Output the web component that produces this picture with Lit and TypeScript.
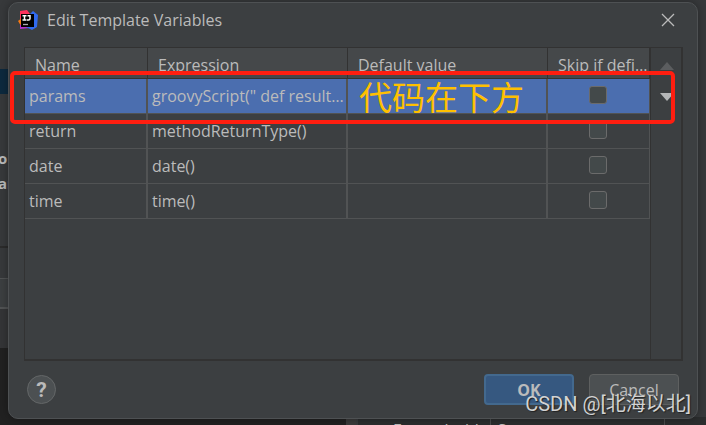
import { LitElement, html, css } from "lit";
import { customElement, state } from "lit/decorators.js";

interface Variable {
  name: string;
  expression: string;
  value: string;
  skip: boolean;
}

@customElement("app-root")
export class AppRoot extends LitElement {
  static styles = css`
    :host {
      display: block;
      position: relative;
      min-height: 100vh;
      overflow: hidden;
      background: #37393b;
      color: #bbbbbb;
      font: 16px/22px "Open Sans", "Noto Sans CJK SC", sans-serif;
    }
    * { box-sizing: border-box; }
    .backdrop {
      position: absolute;
      inset: 0;
      display: flex;
      flex-direction: column;
      overflow: hidden;
    }
    .above { height: 69px; }
    .chosen, .options, .field, .under { width: 50%; }
    .chosen { height: 25px; background: #0d293e; }
    .options { height: 154px; padding-top: 52px; font-weight: 700; font-size: 15px; line-height: 25px; border-bottom: 2px solid #2b2b2b; }
    .options div { height: 25px; margin-left: -2px; }
    .field { height: 31px; margin-top: 30px; background: #3c3f41; border: solid #515354; border-width: 1px 0 2px; }
    .under { height: 39px; background: #343537; }
    .editor { flex: 1; display: flex; align-items: flex-end; }
    .code { flex: 0 0 49%; align-self: stretch; background: #212121; }
    .gutter { flex: none; width: 10px; height: 8px; margin-right: 2px; background: #3a3a3a; }
    .expand { flex: 1; height: 8px; padding-left: 35px; background: #2b2d2e; display: flex; gap: 5px; }
    .expand span { padding-top: 2px; }
    .expand .combo { width: 175px; padding-left: 7px; border: solid #4a4c4d; border-width: 0 1px; }
    .dialog {
      position: relative;
      display: flex;
      flex-direction: column;
      min-height: calc(100vh - 8px);
      margin: 2px 8px 6px;
      padding: 0 14px 13px 15px;
      background: #3c3f41;
      border: 1px solid #4e5153;
      border-radius: 10px;
      box-shadow: 0 0 8px #00000055;
    }
    .titlebar { display: flex; align-items: center; height: 34px; margin: 0 0 10px -6px; }
    .logo { width: 20px; height: 20px; margin-right: 9px; }
    h1 { flex: 1; margin: 0; font-size: 16px; font-weight: 400; }
    .close { display: flex; padding: 6px; margin-right: 2px; border: 0; background: none; }
    .grid {
      flex: 1;
      display: flex;
      border: solid #323232;
      border-width: 1px 2px 2px 1px;
    }
    .data { flex: 1; min-width: 0; }
    table { width: 100%; table-layout: fixed; border-collapse: separate; border-spacing: 0; }
    .c1 { width: 123px; }
    .c2, .c3 { width: 200px; }
    th, td {
      padding: 0 0 0 4px;
      font-weight: 400;
      text-align: left;
      white-space: nowrap;
      overflow: hidden;
      text-overflow: ellipsis;
    }
    th { height: 31px; padding: 4px 0 0 10px; background: #45484a; border-right: 1px solid #323232; border-bottom: 1px solid #323232; }
    td { height: 35px; border-right: 2px solid #515354; border-bottom: 1px solid #515354; }
    td:last-child { border-right-width: 1px; text-align: center; }
    .selected td { background: #4b6eaf; }
    .check {
      appearance: none;
      display: inline-block;
      width: 18px;
      height: 18px;
      margin: 0 5px 4px 0;
      vertical-align: middle;
      background: #43494a;
      border: 1px solid #6b6b6b;
      border-radius: 3px;
    }
    .check:checked { background: #4b6eaf; }
    .side { width: 31px; padding: 14px 0 0 9px; border-left: 1px solid #323232; display: flex; flex-direction: column; gap: 23px; }
    .move { display: flex; padding: 0; border: 0; background: none; color: #b4b6b7; }
    .move:disabled { color: #5b5d5f; }
    .footer { display: flex; align-items: center; gap: 15px; margin: 13px 4px 0 3px; }
    .help {
      width: 29px;
      height: 29px;
      margin-right: auto;
      padding: 2px 0 0;
      border: 1px solid #646768;
      border-radius: 50%;
      background: #4c5052;
      color: #bbbbbb;
      font: 700 21px/25px Roboto, sans-serif;
    }
    .button {
      width: 90px;
      height: 31px;
      padding: 0;
      border: 1px solid #5e6060;
      border-radius: 4px;
      background: #4c5052;
      color: #bbbbbb;
      font: inherit;
    }
    .primary { background: #365880; border: 2px solid #43698e; font-weight: 700; }
    .highlight {
      position: absolute;
      left: 10px;
      right: 31px;
      top: 71px;
      height: 53px;
      border: 4px solid #ff1e10;
      border-radius: 5px;
      pointer-events: none;
    }
    .note {
      position: absolute;
      left: 359px;
      top: 76px;
      color: #ffc000;
      font: 33px/40px "Noto Sans CJK SC", sans-serif;
    }
    .watermark {
      position: absolute;
      right: 15px;
      bottom: 8px;
      color: #d2d3d3;
      font: 20px/26px "Liberation Sans", "Noto Sans CJK SC", sans-serif;
      font-family: Roboto, "Noto Sans CJK SC", sans-serif;
      text-shadow: 1px 1px 1px #222222;
      pointer-events: none;
    }
  `;

  @state() private rows: Variable[] = [
    { name: "params", expression: 'groovyScript(" def result=\'\'; def params', value: "", skip: false },
    { name: "return", expression: "methodReturnType()", value: "", skip: false },
    { name: "date", expression: "date()", value: "", skip: false },
    { name: "time", expression: "time()", value: "", skip: false },
  ];
  @state() private current = 0;

  private toggle(index: number, event: Event) {
    const skip = (event.target as HTMLInputElement).checked;
    this.rows = this.rows.map((row, i) => (i === index ? { ...row, skip } : row));
  }

  private move(step: number) {
    const target = this.current + step;
    if (target < 0 || target >= this.rows.length) return;
    const rows = [...this.rows];
    [rows[this.current], rows[target]] = [rows[target], rows[this.current]];
    this.rows = rows;
    this.current = target;
  }

  private logo() {
    return html`<svg class="logo" viewBox="0 0 20 20" aria-hidden="true">
      <path d="M2 1 9 0 12 4 7 12 2 9Z" fill="#fe315d"/>
      <path d="M0 11 4 8 7 14 3 16Z" fill="#f97a12"/>
      <path d="M2 15 8 12 12 18 2 19Z" fill="#b330c9"/>
      <path d="M12 4 15 1 20 5 19 17 14 20 8 17Z" fill="#316bf0"/>
      <path d="M3 4H16V17H3Z" fill="#000"/>
      <path d="M4.500 5.700H8.500M6.500 5V10M4.500 10H8.500M9.500 5.700H12V8.500Q12 10 10.500 10H9" fill="none" stroke="#fff" stroke-width="1.500"/>
      <path d="M5 14.500H10" stroke="#aaa" stroke-width="1.300"/>
    </svg>`;
  }

  render() {
    return html`
      <div class="backdrop" aria-hidden="true">
        <div class="above"></div>
        <div class="chosen"></div>
        <div class="options"><div>o</div><div>ar</div></div>
        <div class="field"></div>
        <div class="under"></div>
        <div class="editor">
          <div class="code"></div>
          <div class="gutter"></div>
          <div class="expand"><span>Expand with</span><span class="combo">Space</span></div>
        </div>
      </div>
      <section class="dialog" role="dialog" aria-labelledby="title">
        <header class="titlebar">
          ${this.logo()}
          <h1 id="title">Edit Template Variables</h1>
          <button class="close" aria-label="Close">
            <svg width="14" height="14" viewBox="0 0 14 14"><path d="M1 1 13 13M13 1 1 13" stroke="#bbbbbb" stroke-width="1.300"/></svg>
          </button>
        </header>
        <div class="grid">
          <div class="data">
            <table>
              <colgroup><col class="c1" /><col class="c2" /><col class="c3" /><col /></colgroup>
              <thead>
                <tr><th>Name</th><th>Expression</th><th>Default value</th><th>Skip if defined</th></tr>
              </thead>
              <tbody>
                ${this.rows.map(
                  (row, i) => html`<tr class=${i === this.current ? "selected" : ""} @click=${() => (this.current = i)}>
                    <td>${row.name}</td>
                    <td>${row.expression}</td>
                    <td>${row.value}</td>
                    <td>
                      <input class="check" type="checkbox" aria-label="Skip ${row.name} if defined"
                        .checked=${row.skip} @change=${(e: Event) => this.toggle(i, e)} />
                    </td>
                  </tr>`
                )}
              </tbody>
            </table>
          </div>
          <div class="side">
            <button class="move" aria-label="Move up" ?disabled=${this.current === 0} @click=${() => this.move(-1)}>
              <svg width="14" height="8" viewBox="0 0 14 8"><path d="M0 8 7 0 14 8Z" fill="currentColor"/></svg>
            </button>
            <button class="move" aria-label="Move down" ?disabled=${this.current === this.rows.length - 1} @click=${() => this.move(1)}>
              <svg width="14" height="8" viewBox="0 0 14 8"><path d="M0 0 7 8 14 0Z" fill="currentColor"/></svg>
            </button>
          </div>
        </div>
        <footer class="footer">
          <button class="help" aria-label="Help">?</button>
          <button class="button primary">OK</button>
          <button class="button">Cancel</button>
        </footer>
      </section>
      <div class="highlight"></div>
      <div class="note">代码在下方</div>
      <div class="watermark">CSDN @[北海以北]</div>
    `;
  }
}
